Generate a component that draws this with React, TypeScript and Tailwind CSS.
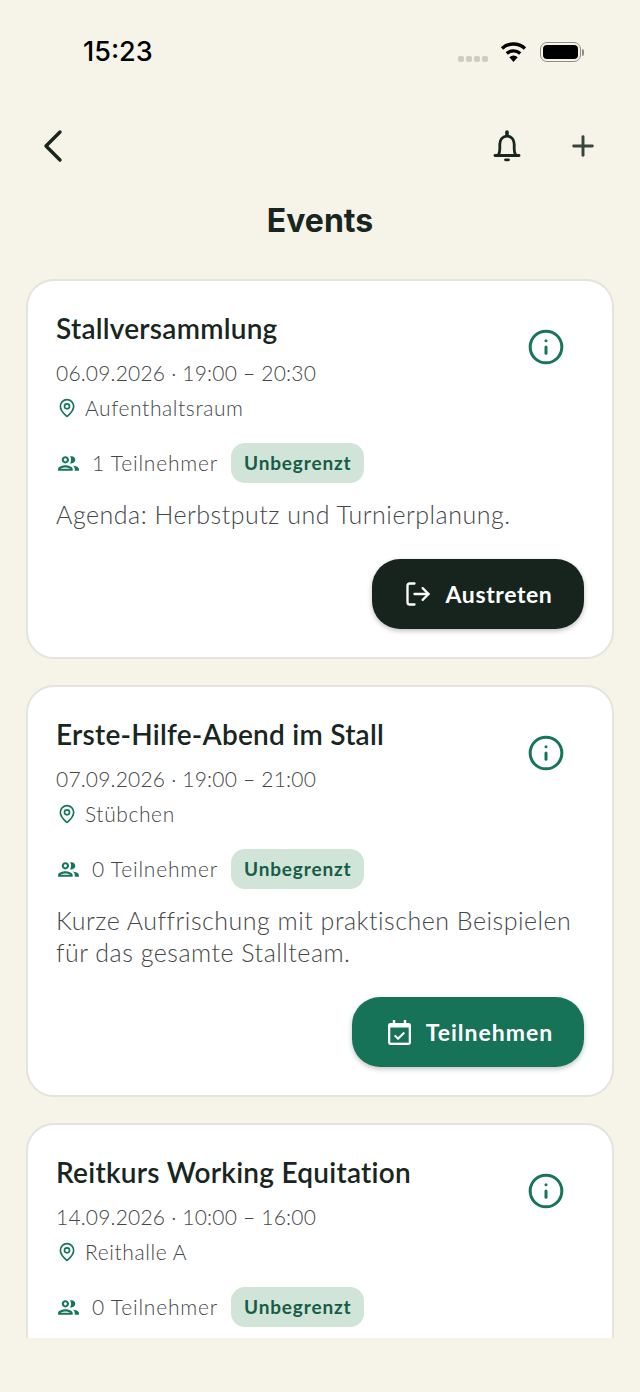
import React from "react";
import { ChevronLeft, Info, LogOut, MapPin, Plus } from "lucide-react";
import { MdOutlinePeople } from "react-icons/md";

const events = [
  {
    title: "Stallversammlung",
    date: "06.09.2026 · 19:00 – 20:30",
    place: "Aufenthaltsraum",
    count: "1 Teilnehmer",
    text: ["Agenda: Herbstputz und Turnierplanung."],
    action: "leave",
  },
  {
    title: "Erste-Hilfe-Abend im Stall",
    date: "07.09.2026 · 19:00 – 21:00",
    place: "Stübchen",
    count: "0 Teilnehmer",
    text: ["Kurze Auffrischung mit praktischen Beispielen", "für das gesamte Stallteam."],
    action: "join",
  },
  {
    // runs past the bottom of the list, only the top part is visible
    title: "Reitkurs Working Equitation",
    date: "14.09.2026 · 10:00 – 16:00",
    place: "Reithalle A",
    count: "0 Teilnehmer",
    text: [],
    action: "none",
  },
];

function StatusBar() {
  return (
    <div className="flex h-[105px] shrink-0 items-start justify-between pl-[83px] pr-[56px] pt-[35px]">
      <span className="text-[27px] leading-[34px] font-medium text-black [font-family:Inter,sans-serif]">15:23</span>
      <div className="flex items-start pt-[7px]">
        <div className="mr-[12px] mt-[14px] flex gap-[2px]">
          <span className="h-[6px] w-[6px] rounded-[2px] bg-[#cfccc4]" />
          <span className="h-[6px] w-[6px] rounded-[2px] bg-[#cfccc4]" />
          <span className="h-[6px] w-[6px] rounded-[2px] bg-[#cfccc4]" />
          <span className="h-[6px] w-[6px] rounded-[2px] bg-[#cfccc4]" />
        </div>
        <svg width="27" height="20" viewBox="0 0 27 20" className="mr-[13px]">
          <path d="M2 6.500A17 17 0 0 1 25 6.500" fill="none" stroke="#000" strokeWidth="3.400" />
          <path d="M6.800 11.500A10 10 0 0 1 20.200 11.500" fill="none" stroke="#000" strokeWidth="3.400" />
          <path d="M13.500 20l4.200-4.700a6.500 6.500 0 0 0-8.400 0z" fill="#000" />
        </svg>
        <div className="flex items-center">
          <div className="flex h-[20px] w-[41px] items-center justify-center rounded-[7px] border border-[#8f8d86] p-[2px]">
            <div className="h-full w-full rounded-[4px] bg-black" />
          </div>
          <div className="ml-[1px] h-[7px] w-[2px] rounded-r-[2px] bg-[#8f8d86]" />
        </div>
      </div>
    </div>
  );
}

function BellIcon() {
  return (
    <svg width="28" height="32" viewBox="0 0 28 32" fill="none" stroke="#18261f" strokeWidth="2.800" strokeLinejoin="round" strokeLinecap="round">
      <path d="M2 25.500h24" />
      <path d="M5 25.500c1.600-2 1.800-3.500 1.800-6.500v-5c0-4.500 3-7.800 7.200-7.800s7.200 3.300 7.200 7.800v5c0 3 .2 4.500 1.800 6.500" />
      <path d="M14 2v3" strokeWidth="3.600" />
      <path d="M12.500 29.800h3" />
    </svg>
  );
}

function CalendarCheck() {
  return (
    <svg width="23" height="25" viewBox="0 0 24 26" className="shrink-0">
      <path d="M5 0h2.500v3h9V0H19v3h2.500A2.500 2.500 0 0 1 24 5.500v18a2.500 2.500 0 0 1-2.500 2.500h-19A2.500 2.500 0 0 1 0 23.500v-18A2.500 2.500 0 0 1 2.500 3H5z" fill="#fff" />
      <rect x="2.400" y="7.800" width="19.200" height="15.800" fill="#167357" />
      <path d="M7 16l3.500 3.500 6.500-6.500" fill="none" stroke="#fff" strokeWidth="2.200" />
    </svg>
  );
}

function EventCard({ item }: { item: (typeof events)[number] }) {
  return (
    <div className={`shrink-0 rounded-[28px] border-2 border-[#e4e3dc] bg-white pb-[28px] pl-[28px] pr-[28px] pt-[27px] ${item.action === "none" ? "min-h-[300px]" : ""}`}>
      <div className="flex items-start justify-between">
        <div>
          <h2 className="text-[28px] leading-[40px] font-semibold tracking-[0.25px] text-[#18261f]">{item.title}</h2>
          <p className="mt-[11px] text-[21px] leading-[28px] font-light tracking-[0.2px] text-[#44474a]">{item.date}</p>
          <div className="mt-[7px] flex items-center gap-[8px] pl-[1px]">
            <MapPin size={20} strokeWidth={2} className="text-[#17755a]" />
            <span className="text-[21px] leading-[28px] font-light tracking-[0.6px] text-[#44474a]">{item.place}</span>
          </div>
        </div>
        <Info size={38} strokeWidth={1.9} className="mr-[19px] mt-[20px] text-[#17755a]" />
      </div>
      <div className="mt-[21px] flex h-[40px] items-center">
        <MdOutlinePeople size={25} className="text-[#17755a]" />
        <span className="ml-[11px] text-[21px] leading-[28px] font-light tracking-[0.8px] text-[#44474a]">{item.count}</span>
        <span className="ml-[13px] flex h-[40px] items-center rounded-[14px] bg-[#d0e5d8] px-[13px] text-[19px] font-bold tracking-[0.85px] text-[#165c46]">
          Unbegrenzt
        </span>
      </div>
      {item.text.length > 0 && (
        <div className="mt-[15px] text-[25px] leading-[32px] font-light tracking-[0.5px] text-[#44474a]">
          {item.text.map((line) => (
            <p key={line}>{line}</p>
          ))}
        </div>
      )}
      {item.action === "leave" && (
        <div className="mt-[29px] flex justify-end">
          <button className="flex h-[70px] w-[212px] items-center justify-center gap-[14px] rounded-[28px] bg-[#17241e] text-[23px] font-bold tracking-[0.6px] text-white shadow-[0_2px_5px_rgba(0,0,0,0.25)]">
            <LogOut size={28} strokeWidth={2} />
            Austreten
          </button>
        </div>
      )}
      {item.action === "join" && (
        <div className="mt-[29px] flex justify-end">
          <button className="flex h-[70px] w-[232px] items-center justify-center gap-[15px] rounded-[28px] bg-[#167357] pl-[5px] text-[23px] font-bold tracking-[1px] text-white shadow-[0_2px_5px_rgba(0,0,0,0.25)]">
            <CalendarCheck />
            Teilnehmen
          </button>
        </div>
      )}
    </div>
  );
}

export default function App() {
  return (
    <div className="flex h-[1392px] w-[640px] flex-col overflow-hidden bg-[#f6f3e9] [font-family:Lato,sans-serif]">
      <StatusBar />
      <div className="flex h-[82px] shrink-0 items-center justify-between pl-[25px] pr-[41px]">
        <ChevronLeft size={56} strokeWidth={1.45} className="text-[#18261f]" />
        <div className="flex items-center gap-[46px]">
          <BellIcon />
          <Plus size={32} strokeWidth={2.2} className="text-[#3a443f]" />
        </div>
      </div>
      <h1 className="mt-[14px] shrink-0 text-center text-[32px] leading-[40px] font-bold text-[#18261f] [font-family:Inter,sans-serif]">Events</h1>
      <div className="mb-[54px] mt-[38px] flex flex-1 flex-col gap-[26px] overflow-hidden px-[26px]">
        {events.map((item) => (
          <EventCard key={item.title} item={item} />
        ))}
      </div>
    </div>
  );
}
